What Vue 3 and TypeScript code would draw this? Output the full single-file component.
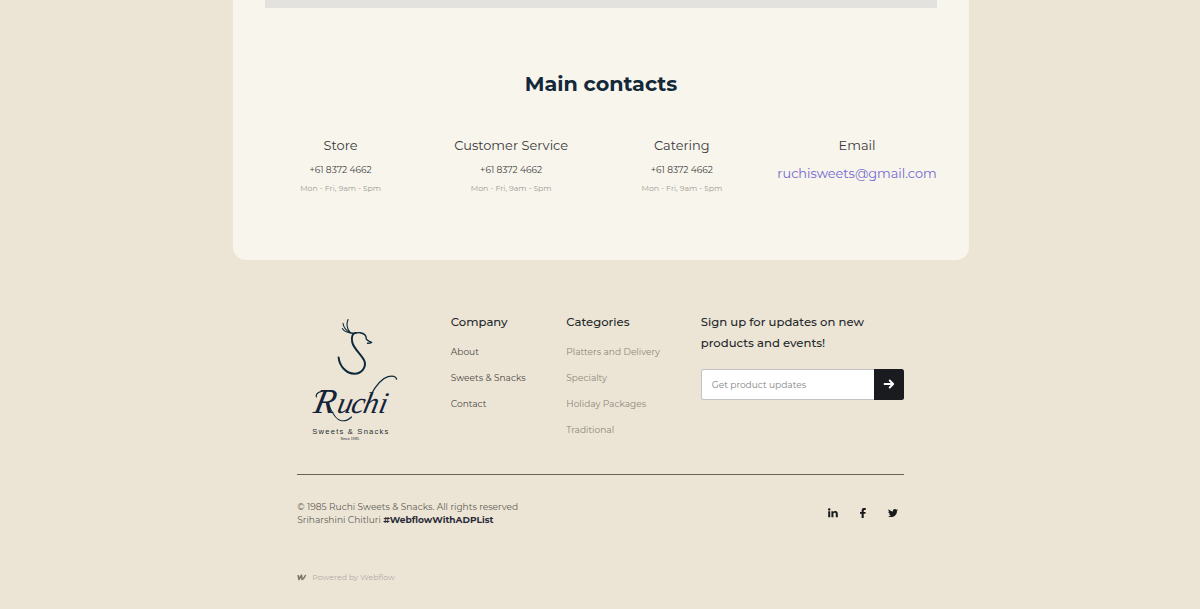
<script setup lang="ts">
interface Contact {
  title: string
  phone: string
  hours: string
}

const contacts: Contact[] = [
  { title: 'Store', phone: '+61 8372 4662', hours: 'Mon - Fri, 9am - 5pm' },
  { title: 'Customer Service', phone: '+61 8372 4662', hours: 'Mon - Fri, 9am - 5pm' },
  { title: 'Catering', phone: '+61 8372 4662', hours: 'Mon - Fri, 9am - 5pm' },
]
const company: string[] = ['About', 'Sweets & Snacks', 'Contact']
const categories: string[] = ['Platters and Delivery', 'Specialty', 'Holiday Packages', 'Traditional']
</script>

<template>
  <div class="page">
    <main class="card">
      <div class="map"></div>
      <h2 class="heading">Main contacts</h2>
      <div class="contacts">
        <section v-for="c in contacts" :key="c.title" class="contact">
          <h3 class="contact-title">{{ c.title }}</h3>
          <p class="phone">{{ c.phone }}</p>
          <p class="hours">{{ c.hours }}</p>
        </section>
        <section class="contact">
          <h3 class="contact-title">Email</h3>
          <a class="email">ruchisweets@gmail.com</a>
        </section>
      </div>
    </main>

    <footer class="footer">
      <div class="top">
        <svg class="logo" width="110" height="140" viewBox="0 0 110 140">
          <g fill="none" stroke="#0d2a3c" stroke-linecap="round" stroke-linejoin="round">
            <path d="M38.600 47.500C39.500 56 46 63.500 54.500 63.700C61.500 63.500 66.300 57.500 64.600 51.500C62.500 45.500 53.500 39 52.200 32C51.200 26.500 52.600 23.600 55.500 22.900" stroke-width="2" />
            <path d="M49.500 22.700C53.500 24.200 56 22.300 60 22.700C64.500 23.400 66.400 26 66.200 28.800C67 31 70 31.400 71.600 32.400C70.300 33.300 69 33.300 67.500 33.300" stroke-width="1.400" />
            <path d="M50.200 22.600C47.500 19.500 46 14.500 48 9.500M50.200 22.600C46.500 20.800 43.500 17 43 13.200M50.200 22.600C46.500 22.300 43.500 20.500 42.300 18.500" stroke-width="1.100" />
            <path d="M16.300 87C15.500 83.500 19.500 80.500 27 80.600M28 94C31.500 99.500 33.500 108.500 40.500 110.500C45 111.500 48.500 110 51.500 107" stroke-width="1.100" />
            <path d="M70.300 86C75 77 81.500 68.500 88 66.700C92.500 65.500 96 66.300 96.600 69.200" stroke-width="1.300" />
          </g>
          <g class="script" transform="skewX(-12)">
            <text class="initial" x="34.500" y="103.300">R</text>
            <text x="58 72 84 99.500" y="103.300">uchi</text>
          </g>
          <text class="tagline" x="12.300" y="124.300" textLength="76" lengthAdjust="spacing">Sweets &amp; Snacks</text>
          <text class="since" x="40.500" y="130" textLength="18.500" lengthAdjust="spacingAndGlyphs">Since 1985</text>
        </svg>

        <nav class="col company">
          <h4 class="col-title">Company</h4>
          <a v-for="l in company" :key="l" class="link">{{ l }}</a>
        </nav>
        <nav class="col categories">
          <h4 class="col-title">Categories</h4>
          <a v-for="l in categories" :key="l" class="link muted">{{ l }}</a>
        </nav>
        <div class="signup">
          <p class="signup-text">Sign up for updates on new<br />products and events!</p>
          <form class="form" @submit.prevent>
            <input class="input" type="text" placeholder="Get product updates" />
            <button class="send" type="submit" aria-label="Subscribe">
              <svg width="12" height="10" viewBox="0 0 12 10">
                <path d="M1.500 5H10M6.700 1.500L10.200 5L6.700 8.500" fill="none" stroke="#fff" stroke-width="1.800" stroke-linecap="round" stroke-linejoin="round" />
              </svg>
            </button>
          </form>
        </div>
      </div>

      <div class="bottom">
        <p class="legal">
          © 1985 Ruchi Sweets &amp; Snacks. All rights reserved<br />Sriharshini Chitluri <b class="tag">#WebflowWithADPList</b>
        </p>
        <div class="social">
          <svg width="10" height="10" viewBox="0 0 10 10" fill="#191a1c">
            <circle cx="1.200" cy="1.400" r="1.200" />
            <path d="M.2 3.300h2V9.200H.2zM3.400 3.300h1.900v.8C5.700 3.500 6.300 3.100 7.300 3.100C9.100 3.100 9.800 4.200 9.800 5.900V9.200H7.800V6.200C7.800 5.300 7.600 4.800 6.700 4.800S5.400 5.300 5.400 6.200V9.200H3.400z" />
          </svg>
          <svg width="10" height="10" viewBox="0 0 10 10" fill="#191a1c">
            <path d="M3.600 10V5.800H2V3.900h1.600V2.600C3.600 1 4.600.1 6.300.1c.7 0 1.300.1 1.500.1v1.700H6.700c-.8 0-1 .4-1 1v1h2L7.400 5.800H5.700V10z" />
          </svg>
          <svg width="10" height="10" viewBox="0 0 24 24" fill="#191a1c">
            <path d="M24 4.600c-.9.400-1.800.7-2.800.8 1-.6 1.800-1.600 2.200-2.700-1 .6-2 1-3.100 1.200C19.300 2.900 18.100 2.200 16.600 2.200c-3.200 0-5.500 3-4.800 6C7.700 8 4.100 6 1.700 3.100.4 5.300 1 8.200 3.200 9.700c-.8 0-1.600-.2-2.200-.6-.1 2.300 1.600 4.400 3.900 4.900-.7.200-1.500.2-2.200.1.600 2 2.400 3.400 4.600 3.400C5.200 19.200 2.600 20 0 19.600c2.200 1.400 4.800 2.200 7.500 2.200 9.100 0 14.300-7.700 14-14.600 1-.7 1.800-1.600 2.500-2.600z" />
          </svg>
        </div>
      </div>

      <div class="powered">
        <svg width="10" height="7" viewBox="0 0 10 7">
          <path d="M1.200 1L1.900 5.500L4.500 1.200L5.100 5.500C6.800 4.800 7.800 2.800 8.700 1" fill="none" stroke="#7d766a" stroke-width="1.600" stroke-linejoin="round" />
        </svg>
        <span>Powered by Webflow</span>
      </div>
    </footer>
  </div>
</template>

<style>
html,
body {
  margin: 0;
  background: #ece5d5;
}
</style>

<style scoped>
.page {
  height: 609px;
  overflow: hidden;
  background: #ece5d5;
  font-family: Montserrat, Inter, 'Open Sans', sans-serif;
}
h2, h3, h4, p {
  margin: 0;
  font-weight: 400;
}
.card {
  box-sizing: border-box;
  width: 736px;
  height: 260px;
  margin-left: 233px;
  padding: 0 32px;
  border-radius: 0 0 13px 13px;
  background: #f8f5ec;
}
.map {
  height: 8px;
  background: #e4e2de;
}
.heading {
  margin-top: 62px;
  font-size: 20.7px;
  font-weight: 700;
  line-height: 28px;
  text-align: center;
  color: #13293a;
}
.contacts {
  display: grid;
  grid-template-columns: 1fr 1fr 1fr 160px;
  column-gap: 19.6px;
  margin-top: 37px;
}
.contact {
  display: flex;
  flex-direction: column;
  align-items: center;
  white-space: nowrap;
}
.contact-title {
  font-size: 12.95px;
  line-height: 21px;
  color: #38393b;
}
.phone {
  margin-top: 5px;
  font-size: 9.06px;
  line-height: 18px;
  color: #404142;
}
.hours {
  margin-top: 1px;
  font-size: 7.77px;
  line-height: 16px;
  color: #9c9a95;
}
.email {
  margin-top: 8px;
  font-size: 12.9px;
  line-height: 20px;
  color: #7268d0;
}
.footer {
  width: 607px;
  margin-left: 297.3px;
  padding-top: 50px;
}
.top {
  display: flex;
  height: 163.6px;
  border-bottom: 1px solid #6a6256;
  white-space: nowrap;
}
.logo {
  flex: none;
  margin-left: 2.7px;
}
.script {
  font: italic 30px 'Liberation Serif', serif;
  fill: #14233a;
}
.initial {
  font-size: 35px;
}
.tagline {
  font: 7.6px 'Liberation Sans', sans-serif;
  fill: #292c32;
}
.since {
  font: 3.8px 'Liberation Sans', sans-serif;
  fill: #292c32;
}
.col {
  display: flex;
  flex-direction: column;
}
.company {
  width: 115.5px;
  margin-left: 40.8px;
}
.categories {
  width: 134.5px;
}
.col-title {
  margin-bottom: 5.4px;
  font-size: 11.65px;
  font-weight: 500;
  line-height: 24px;
  color: #25282c;
}
.link {
  font-size: 9.06px;
  line-height: 25.8px;
  color: #4d4a45;
}
.muted {
  color: #8d877b;
}
.signup {
  width: 203.5px;
}
.signup-text {
  margin-top: 2px;
  font-size: 11.65px;
  font-weight: 500;
  line-height: 20.6px;
  color: #25282c;
}
.form {
  display: flex;
  height: 31px;
  margin-top: 15.6px;
}
.input {
  box-sizing: border-box;
  flex: 1;
  min-width: 0;
  padding: 0 10px;
  border: 1px solid #c4c4c6;
  border-right: 0;
  border-radius: 2.5px 0 0 2.5px;
  outline: 0;
  background: #fff;
  font-family: inherit;
  font-size: 9.06px;
}
.input::placeholder {
  color: #838385;
}
.send {
  display: flex;
  align-items: center;
  justify-content: center;
  width: 30.5px;
  padding: 0;
  border: 0;
  border-radius: 0 2.5px 2.5px 0;
  background: #1a1b1f;
}
.bottom {
  display: flex;
  justify-content: space-between;
  padding-top: 25.2px;
}
.legal {
  font-size: 9.06px;
  line-height: 13px;
  color: #625d55;
}
.tag {
  font-weight: 700;
  color: #2a2c3a;
}
.social {
  display: flex;
  gap: 20.1px;
  margin-top: 7.8px;
  height: 10px;
  padding-right: 6.1px;
}
.powered {
  display: flex;
  align-items: center;
  gap: 5px;
  margin-top: 43.3px;
  font-size: 7.77px;
  line-height: 16px;
  color: #b3aba6;
}
</style>
